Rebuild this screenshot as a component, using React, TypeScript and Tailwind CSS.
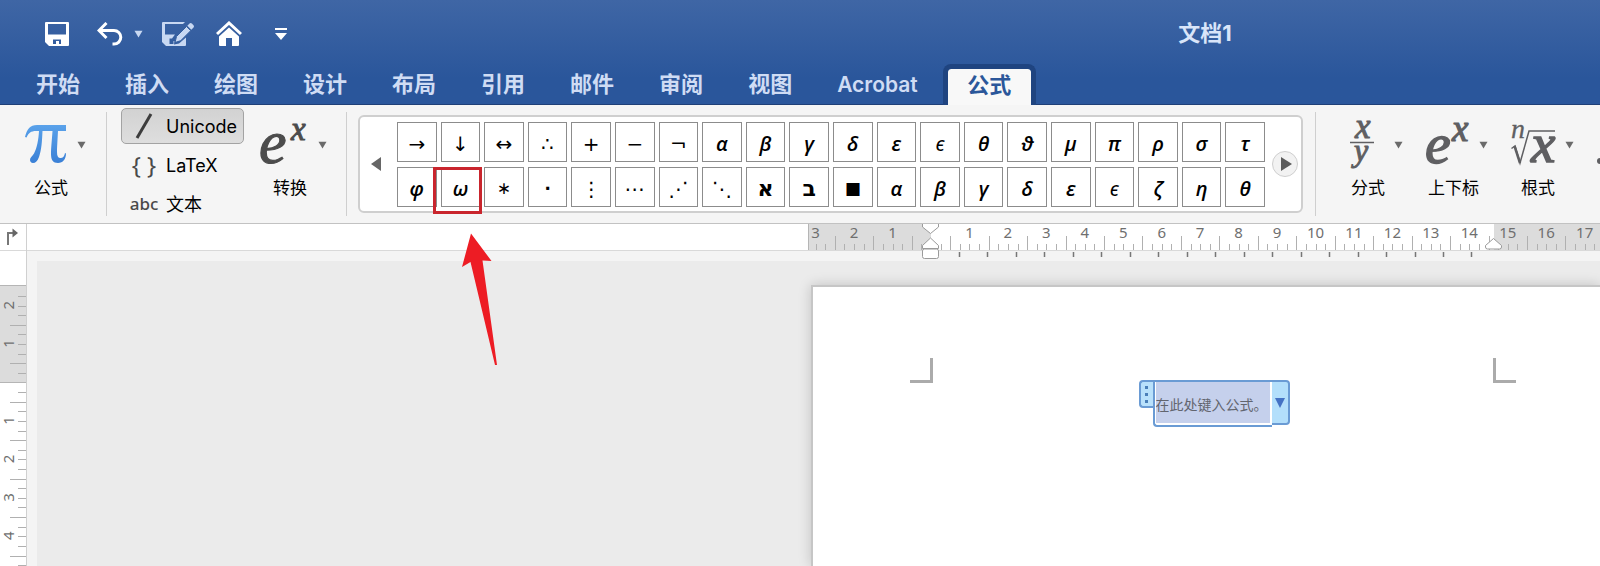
import React from "react";

const TABS = ["开始", "插入", "绘图", "设计", "布局", "引用", "邮件", "审阅", "视图", "Acrobat"];

const SYMBOLS: string[] = [
  "→", "↓", "↔", "∴", "+", "−", "¬", "α", "β", "γ", "δ", "ε", "ϵ", "θ", "ϑ", "μ", "π", "ρ", "σ", "τ",
  "φ", "ω", "∗", "⋅", "⋮", "⋯", "⋰", "⋱", "א", "ב", "■", "α", "β", "γ", "δ", "ε", "ϵ", "ζ", "η", "θ",
];

const UNIT = 38.45;

function Caret({ className = "text-[#6a6a6a]" }: { className?: string }) {
  return (
    <svg width="9" height="8" viewBox="0 0 9 8" className={`shrink-0 ${className}`} aria-hidden="true">
      <path d="M0.5 0.8h8L4.5 7.4z" fill="currentColor" />
    </svg>
  );
}

function SaveIcon() {
  return (
    <svg width="24" height="24" viewBox="0 0 24 24" aria-hidden="true">
      <path
        fillRule="evenodd"
        fill="#ffffff"
        d="M1 0h22a1 1 0 0 1 1 1v22a1 1 0 0 1-1 1H4l-4-4V1a1 1 0 0 1 1-1zM3 2v10.500h18V2zM8 17.500v4.500h3v-3h3v3h2v-4.500z"
      />
    </svg>
  );
}

function UndoIcon() {
  return (
    <svg width="26" height="24" viewBox="0 0 26 24" fill="none" stroke="#ffffff" strokeWidth="3" aria-hidden="true">
      <path d="M9.500 1L2 8.500l7.500 7.500" />
      <path d="M2.500 8.500h14.500a6.800 6.800 0 0 1 0 13.600h-1.500" />
    </svg>
  );
}

function SaveEditIcon() {
  return (
    <svg width="32" height="24" viewBox="0 0 32 24" aria-hidden="true">
      <path
        fillRule="evenodd"
        fill="#c8d8f2"
        d="M1 0h22l-2 2H3v10.500h10L10 16.500H7.500v5.500h4v-3h1l-.5 3.500 5-1 7-6V23a1 1 0 0 1-1 1H4l-4-4V1a1 1 0 0 1 1-1z"
      />
      <path d="M13 20.500l1.500-6L24.500 4.500l4.200 4.200L18.700 18.700z" fill="#c8d8f2" stroke="#355f9f" strokeWidth="1" />
      <path d="M25.300 3.700l2-2a2 2 0 0 1 2.800 0l1.200 1.200a2 2 0 0 1 0 2.800l-2 2z" fill="#c8d8f2" />
    </svg>
  );
}

function HomeIcon() {
  return (
    <svg width="26" height="26" viewBox="0 0 26 26" aria-hidden="true">
      <path d="M1 13L13 2l12 11" fill="none" stroke="#ffffff" strokeWidth="3" />
      <path d="M3 15.500L13 6.500l10 9V24a1 1 0 0 1-1 1h-6v-8h-6v8H4a1 1 0 0 1-1-1z" fill="#ffffff" />
    </svg>
  );
}

function MoreIcon() {
  return (
    <svg width="12" height="12" viewBox="0 0 12 12" fill="#ffffff" aria-hidden="true">
      <path d="M0 0h12v2H0zM0 5h12l-6 7z" />
    </svg>
  );
}

const MATH = "overflow-visible font-['Liberation_Serif',serif] italic";

function PiIcon() {
  return (
    <svg width="42" height="50" viewBox="0 0 42 50" aria-hidden="true">
      <defs>
        <linearGradient id="pi" x1="0" y1="0" x2="0" y2="1">
          <stop offset="0" stopColor="#5aa2ea" />
          <stop offset="1" stopColor="#3a80d6" />
        </linearGradient>
      </defs>
      <path
        fill="url(#pi)"
        d="M0 17C2 9 5 5 12 5H41V11H33C32.500 20 32 28 32 32C32 36 33 38 35.500 38C38 38 39.500 36 40 33L41 33.500C41 39 38 43 33 43C28 43 26 40 26 34C26 28 27 19 27.500 11H17.500C17 22 16.500 30 14 37C12.500 41 10.500 43 8 43C6 43 5 41.500 5 40C5 37.500 7 36.500 9 33.500C12 28 13.500 20 14 11H11C6 11 3.500 13 1.500 17.500Z"
      />
    </svg>
  );
}

function PowerIcon() {
  return (
    <svg width="48" height="50" viewBox="0 0 48 50" className={MATH} fill="#4c4c4c" stroke="#4c4c4c" aria-hidden="true">
      <text x="-1" y="43" fontSize="62" strokeWidth="1.200">e</text>
      <text x="31" y="20" fontSize="33" strokeWidth="1">x</text>
    </svg>
  );
}

function ScriptIcon() {
  return (
    <svg width="44" height="50" viewBox="0 0 44 50" className={MATH} fill="#5f5f62" stroke="#5f5f62" aria-hidden="true">
      <text x="-1" y="43" fontSize="58" strokeWidth="1.500">e</text>
      <text x="26" y="21" fontSize="37" strokeWidth="1.200">x</text>
    </svg>
  );
}

function FractionIcon() {
  return (
    <svg width="26" height="50" viewBox="0 0 26 50" className={MATH} fill="#5f5f62" stroke="#5f5f62" aria-hidden="true">
      <text x="5" y="18" fontSize="35" strokeWidth="1">x</text>
      <path d="M0 22.500h24" strokeWidth="1.500" />
      <text x="4" y="41" fontSize="32" strokeWidth="1">y</text>
    </svg>
  );
}

function RootIcon() {
  return (
    <svg width="45" height="50" viewBox="0 0 45 50" className={MATH} fill="#5f5f62" stroke="#5f5f62" aria-hidden="true">
      <text x="0" y="18" fontSize="28" strokeWidth="0.300">n</text>
      <path d="M0.500 28.500L4 26l5 17L18 11h26" fill="none" strokeWidth="1.500" />
      <path d="M3.500 26l5.500 17" fill="none" strokeWidth="2.500" />
      <text x="20" y="42" fontSize="55" strokeWidth="1.500">x</text>
    </svg>
  );
}

function RibbonButton({ icon, label, gap, indent }: { icon: React.ReactNode; label: string; gap: string; indent: string }) {
  return (
    <button type="button" className="mt-3.5 flex shrink-0 flex-col items-start">
      <span className={`flex items-center ${gap}`}>
        {icon}
        <Caret />
      </span>
      <span className={`mt-1.5 text-[17px] leading-6 whitespace-nowrap text-black ${indent}`}>{label}</span>
    </button>
  );
}

function Divider() {
  return <div className="mt-1.5 h-26 w-px shrink-0 bg-[#cfcfcf]" />;
}

function ModeButton({ icon, label, active = false }: { icon: React.ReactNode; label: string; active?: boolean }) {
  return (
    <button
      type="button"
      aria-pressed={active}
      className={`flex h-9 items-center rounded-[5px] border pl-1.5 text-[18px] text-black ${
        active ? "border-[#a3a3a3] bg-linear-to-b from-[#d2d2d2] to-[#dedede]" : "border-transparent"
      }`}
    >
      <span className="flex w-8 justify-center text-[#4a4a4a]">{icon}</span>
      <span className="ml-1.5">{label}</span>
    </button>
  );
}

function symbolStyle(s: string) {
  if (s === "■") return "font-['DejaVu_Sans',sans-serif] text-[17px]";
  if (/[אב]/.test(s)) return "font-['DejaVu_Sans',sans-serif] font-bold text-[22px]";
  if (s === "ϵ") return "font-['Open_Sans','Noto_Sans',sans-serif] italic text-[20px]";
  if (/[α-ωϑ]/.test(s)) return "font-['Open_Sans','Noto_Sans',sans-serif] font-semibold italic text-[20px]";
  if (s === "∗") return "font-['DejaVu_Sans',sans-serif] text-[17px]";
  if (s === "⋅") return "font-['DejaVu_Sans',sans-serif] font-bold text-[17px]";
  return "font-['DejaVu_Sans',sans-serif] text-[20px]";
}

function Callout() {
  return (
    <>
      <span className="pointer-events-none absolute -top-px -left-[9px] z-10 h-[47px] w-[49px] border-3 border-[#c9252d]" />
      <svg
        className="pointer-events-none absolute top-16 left-5 z-10"
        width="40"
        height="136"
        viewBox="0 0 40 136"
        aria-hidden="true"
      >
        <path d="M9 1.500L29.500 29L20.500 28.500L35 133L33 133L8.500 30L0 35Z" fill="#ed1c24" />
      </svg>
    </>
  );
}

function Gallery() {
  return (
    <div className="mt-[9px] ml-[11px] flex h-[98px] min-w-0 flex-1 items-center rounded-md border-2 border-[#cfcfcf] bg-white">
      <button type="button" aria-label="上一页" className="ml-[11px] flex w-[26px] shrink-0">
        <svg width="10" height="14" viewBox="0 0 10 14" aria-hidden="true">
          <path d="M10 0v14L0 7z" fill="#666" />
        </svg>
      </button>
      <div className="grid min-w-0 flex-1 grid-cols-[repeat(20,minmax(0,1fr))] gap-x-1 gap-y-[5px]">
        {SYMBOLS.map((s, i) => (
          <button
            key={i}
            type="button"
            className={`relative flex h-10 items-center justify-center border border-[#8c8c8c] bg-white pt-1 leading-none text-black ${symbolStyle(s)}`}
          >
            {s}
            {i === 21 && <Callout />}
          </button>
        ))}
      </div>
      <button
        type="button"
        aria-label="下一页"
        className="mr-[3px] ml-[7px] flex size-[26px] shrink-0 items-center justify-center rounded-full border border-[#cfcfcf] bg-[#f2f2f2] pl-0.5"
      >
        <svg width="11" height="14" viewBox="0 0 11 14" aria-hidden="true">
          <path d="M0 0v14l11-7z" fill="#5c5c5c" />
        </svg>
      </button>
    </div>
  );
}

function tickRange(from: number, to: number) {
  return Array.from({ length: to - from + 1 }, (_, i) => from + i);
}

function HorizontalRuler() {
  const origin = 123;
  const end = 686;
  return (
    <svg
      className="h-[37px] min-w-0 flex-1 overflow-visible font-['Noto_Sans',sans-serif]"
      fontSize="15"
      textAnchor="middle"
      fill="#6f6f6f"
      aria-label="水平标尺"
    >
      <rect x="0" y="0" width={origin} height="26" fill="#dcdcdc" />
      <rect x={end} y="0" width="2000" height="26" fill="#dcdcdc" />
      <path d="M0.500 0v26" stroke="#b5b5b5" />
      {tickRange(-12, 80).map((k) => {
        const x = Math.round(origin + (k * UNIT) / 4);
        const major = Math.abs(k % 4) === 2;
        return <path key={k} d={`M${x + 0.5} ${major ? 12 : 20}V26`} stroke="#b0b0b0" />;
      })}
      {tickRange(-3, 17)
        .filter((n) => n !== 0)
        .map((n) => (
          <text key={n} x={origin + n * UNIT} y="14">
            {Math.abs(n)}
          </text>
        ))}
      {tickRange(0, 18).map((n) => (
        <path key={n} d={`M${Math.round(151 + n * 28.47) + 0.5} 28v5`} stroke="#777777" strokeWidth="1.500" />
      ))}
      <g fill="#ffffff" stroke="#9a9a9a">
        <path d="M114.500 0v3l8 6.500l8-6.500V0" />
        <path d="M122.500 14l8 7.500v3h-16v-3z" strokeLinejoin="round" />
        <rect x="114.500" y="25" width="16" height="9.500" rx="2" />
        <path d="M685.500 14.500l8 7v1.500a2 2 0 0 1-2 2h-12a2 2 0 0 1-2-2v-1.500z" strokeLinejoin="round" />
      </g>
    </svg>
  );
}

function VerticalRuler() {
  const top = 34;
  const origin = 131.5;
  return (
    <svg
      className="h-0 min-h-0 w-full flex-1 font-['Noto_Sans',sans-serif]"
      fontSize="15"
      textAnchor="middle"
      fill="#6f6f6f"
      aria-label="垂直标尺"
    >
      <rect x="0" y={top} width="26" height={origin - top} fill="#dcdcdc" />
      <path d={`M0 ${top + 0.5}h26M0 ${origin}h26`} stroke="#b5b5b5" />
      {tickRange(-9, 40)
        .filter((k) => k !== 0)
        .map((k) => {
          const y = Math.round(origin + (k * UNIT) / 4);
          const major = Math.abs(k % 4) === 2;
          return <path key={k} d={`M${major ? 10 : 18} ${y + 0.5}H26`} stroke="#b0b0b0" />;
        })}
      {tickRange(-2, 4)
        .filter((n) => n !== 0)
        .map((n) => (
          <text key={n} transform={`translate(14 ${origin + n * UNIT - 0.5}) rotate(-90)`}>
            {Math.abs(n)}
          </text>
        ))}
    </svg>
  );
}

function EquationField() {
  return (
    <div className="flex items-start">
      <div className="flex h-7 w-3.5 flex-col items-center justify-center gap-1 rounded-l-[4px] border-2 border-r-0 border-[#6a9bd4] bg-[#b9e1fb]">
        <span className="size-[3px] bg-[#4a7fb8]" />
        <span className="size-[3px] bg-[#4a7fb8]" />
        <span className="size-[3px] bg-[#4a7fb8]" />
      </div>
      <div className="flex h-[47px] rounded-bl-[4px] border-2 border-r-0 border-[#6a9bd4] bg-white pb-0.5 pl-px">
        <div className="flex w-[114px] items-center bg-[#c5d0ec] pt-1 text-sm whitespace-nowrap text-[#62656f]">
          在此处键入公式。
        </div>
        <div className="w-0.5 bg-white" />
      </div>
      <button
        type="button"
        aria-label="公式选项"
        className="flex h-[45px] w-[18px] items-center justify-center rounded-r-[4px] border-2 border-l-0 border-[#6a9bd4] bg-[#b3dffb]"
      >
        <svg width="10" height="10" viewBox="0 0 10 10" aria-hidden="true">
          <path d="M0 0h10L5 10z" fill="#4472c4" />
        </svg>
      </button>
    </div>
  );
}

export default function App() {
  return (
    <div className="flex h-screen flex-col overflow-hidden bg-[#f4f4f4] font-[Inter,'Noto_Sans_CJK_SC',sans-serif]">
      <header className="shrink-0 border-b border-[#1f3f77] bg-linear-to-b from-[#3f66a5] to-[#2a569b] to-75%">
        <div className="flex h-16 items-center pt-[3px] pl-[45px]">
          <button type="button" aria-label="保存"><SaveIcon /></button>
          <button type="button" aria-label="撤消" className="ml-7"><UndoIcon /></button>
          <button type="button" aria-label="撤消选项" className="ml-[11px]"><Caret className="text-[#c8d8f2]" /></button>
          <button type="button" aria-label="另存为" className="ml-[19px]"><SaveEditIcon /></button>
          <button type="button" aria-label="主页" className="ml-[22px]"><HomeIcon /></button>
          <button type="button" aria-label="自定义工具栏" className="ml-[33px]"><MoreIcon /></button>
          <h1 className="mx-auto pl-[523px] text-[22px] font-bold text-[#d9e5f9]">文档1</h1>
        </div>
        <nav className="flex h-10 pl-9">
          {TABS.map((t) => (
            <button key={t} type="button" className="mr-[45px] pb-px text-[22px] leading-none font-bold whitespace-nowrap text-[#cfdcf4]">
              {t === "Acrobat" ? <span className="text-[21px] font-semibold">{t}</span> : t}
            </button>
          ))}
          <button
            type="button"
            className="-mb-px -ml-5 w-[93px] rounded-t-lg border-5 border-b-0 border-[#1f4480] bg-[#f8f8f8] bg-clip-padding pb-[5px] text-[22px] leading-none font-bold text-[#2b579a]"
          >
            公式
          </button>
        </nav>
      </header>

      <section className="flex h-[119px] shrink-0 items-start border-b border-[#c2c2c2] bg-[#f5f5f5] pt-px pl-[25px]">
        <RibbonButton icon={<PiIcon />} label="公式" gap="gap-2.5" indent="pl-[9px]" />
        <div className="ml-5 flex shrink-0">
          <Divider />
        </div>
        <div className="mt-0.5 ml-3.5 flex w-[123px] shrink-0 flex-col gap-[3px]">
          <ModeButton
            active
            label="Unicode"
            icon={
              <svg width="18" height="26" viewBox="0 0 18 26" aria-hidden="true">
                <path d="M2 25L16 1" stroke="#3d3d3d" strokeWidth="3" />
              </svg>
            }
          />
          <ModeButton
            label="LaTeX"
            icon={<span className="font-['Noto_Sans',sans-serif] text-[24px] leading-none whitespace-nowrap">{"{ }"}</span>}
          />
          <ModeButton label="文本" icon={<span className="font-['Noto_Sans',sans-serif] text-[17px] font-medium">abc</span>} />
        </div>
        <div className="mr-[19px] ml-4 flex shrink-0">
          <RibbonButton icon={<PowerIcon />} label="转换" gap="gap-2.5" indent="pl-[13px]" />
        </div>
        <Divider />
        <Gallery />
        <div className="flex shrink-0 pl-3">
          <Divider />
        </div>
        <div className="flex w-[284px] shrink-0 items-start overflow-hidden pl-[34px]">
          <RibbonButton icon={<FractionIcon />} label="分式" gap="gap-[18px]" indent="pl-px" />
          <div className="ml-[23px]">
            <RibbonButton icon={<ScriptIcon />} label="上下标" gap="gap-[9px]" indent="pl-0.5" />
          </div>
          <div className="ml-[23px]">
            <RibbonButton icon={<RootIcon />} label="根式" gap="gap-[9px]" indent="pl-2.5" />
          </div>
          <svg width="20" height="64" viewBox="0 0 20 64" className="ml-[23px] shrink-0" aria-hidden="true">
            <circle cx="3" cy="55" r="3" fill="#5f5f62" />
          </svg>
        </div>
      </section>

      <main className="flex min-h-0 flex-1">
        <aside className="flex w-[26px] shrink-0 flex-col bg-white">
          <button type="button" aria-label="制表符" className="flex h-[27px] w-full shrink-0 border-b border-[#d9d9d9] pt-1 pl-1.5">
            <svg width="13" height="18" viewBox="0 0 13 18" fill="none" aria-hidden="true">
              <path d="M2 17V5h6" stroke="#777" strokeWidth="2" />
              <path d="M6.500 0.500L12 5L6.500 9.500z" fill="#666" />
            </svg>
          </button>
          <VerticalRuler />
        </aside>
        <div className="flex min-w-0 flex-1 flex-col border-l border-[#d0d0d0]">
          <div className="flex h-[27px] shrink-0 border-b border-[#d9d9d9] bg-white pl-[781px]">
            <HorizontalRuler />
          </div>
          <div className="mt-2.5 ml-2.5 flex min-h-0 flex-1 overflow-hidden bg-[#ebebeb] pt-6 pl-[774px]">
            <article className="flex min-w-0 flex-1 items-start border-t-2 border-l-2 border-[#c6c6c6] bg-white pt-[71px] pl-[97px] shadow-[0_0_12px_rgba(0,0,0,0.18)]">
              <div className="h-[25px] w-[23px] shrink-0 border-r-3 border-b-3 border-[#ababab]" />
              <div className="flex w-[560px] shrink-0 justify-center pt-[22px] pl-0.5">
                <EquationField />
              </div>
              <div className="h-[25px] w-[23px] shrink-0 border-b-3 border-l-3 border-[#ababab]" />
            </article>
          </div>
        </div>
      </main>
    </div>
  );
}
